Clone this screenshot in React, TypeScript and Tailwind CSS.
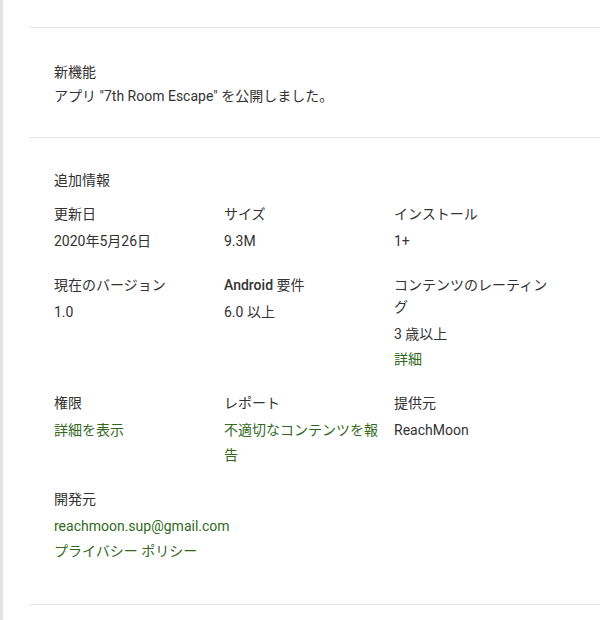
const font = { fontFamily: 'Roboto, "Noto Sans CJK JP", sans-serif' };

type Cell = {
  label: React.ReactNode;
  values: { text: string; link?: boolean }[];
};

const rows: Cell[][] = [
  [
    { label: '更新日', values: [{ text: '2020年5月26日' }] },
    { label: 'サイズ', values: [{ text: '9.3M' }] },
    { label: 'インストール', values: [{ text: '1+' }] },
  ],
  [
    { label: '現在のバージョン', values: [{ text: '1.0' }] },
    {
      label: (
        <>
          <span className="font-medium">Android</span> 要件
        </>
      ),
      values: [{ text: '6.0 以上' }],
    },
    {
      label: 'コンテンツのレーティング',
      values: [{ text: '3 歳以上' }, { text: '詳細', link: true }],
    },
  ],
  [
    { label: '権限', values: [{ text: '詳細を表示', link: true }] },
    { label: 'レポート', values: [{ text: '不適切なコンテンツを報告', link: true }] },
    { label: '提供元', values: [{ text: 'ReachMoon' }] },
  ],
  [
    {
      label: '開発元',
      values: [
        { text: 'reachmoon.sup@gmail.com', link: true },
        { text: 'プライバシー ポリシー', link: true },
      ],
    },
  ],
];

const App = () => {
  return (
    <div className="flex w-[600px] h-[620px] bg-white overflow-hidden text-[14px] text-[#333]" style={font}>
      <div className="w-[3px] shrink-0 bg-[#e3e3e3]" />
      <div className="flex-1 pl-[26px]">
        <div className="h-[27px]" />

        {/* What's new */}
        <div className="border-t border-[#e6e6e6] pt-[33px] pb-[29px] pl-[25px]">
          <h3 className="leading-[22px]">新機能</h3>
          <p className="leading-[24px] mt-[1px]">アプリ "7th Room Escape" を公開しました。</p>
        </div>

        {/* Additional info */}
        <div className="border-t border-[#e6e6e6] pt-[31px] pl-[25px] pb-[20px]">
          <h3 className="leading-[22px] mb-[12px]">追加情報</h3>
          {rows.map((row, i) => (
            <div key={i} className="flex">
              {row.map((cell, j) => (
                <div key={j} className="w-[170px] pr-[12px] mb-[20px]">
                  <div className="leading-[22px]">{cell.label}</div>
                  <div className="mt-[4px]">
                    {cell.values.map((v, k) => (
                      <div
                        key={k}
                        className={v.link ? 'leading-[25px] text-[#33691e]' : 'leading-[25px] text-[#333]'}
                      >
                        {v.text}
                      </div>
                    ))}
                  </div>
                </div>
              ))}
            </div>
          ))}
        </div>
        <div className="border-t border-[#e6e6e6]" />
      </div>
    </div>
  );
};

export default App;
